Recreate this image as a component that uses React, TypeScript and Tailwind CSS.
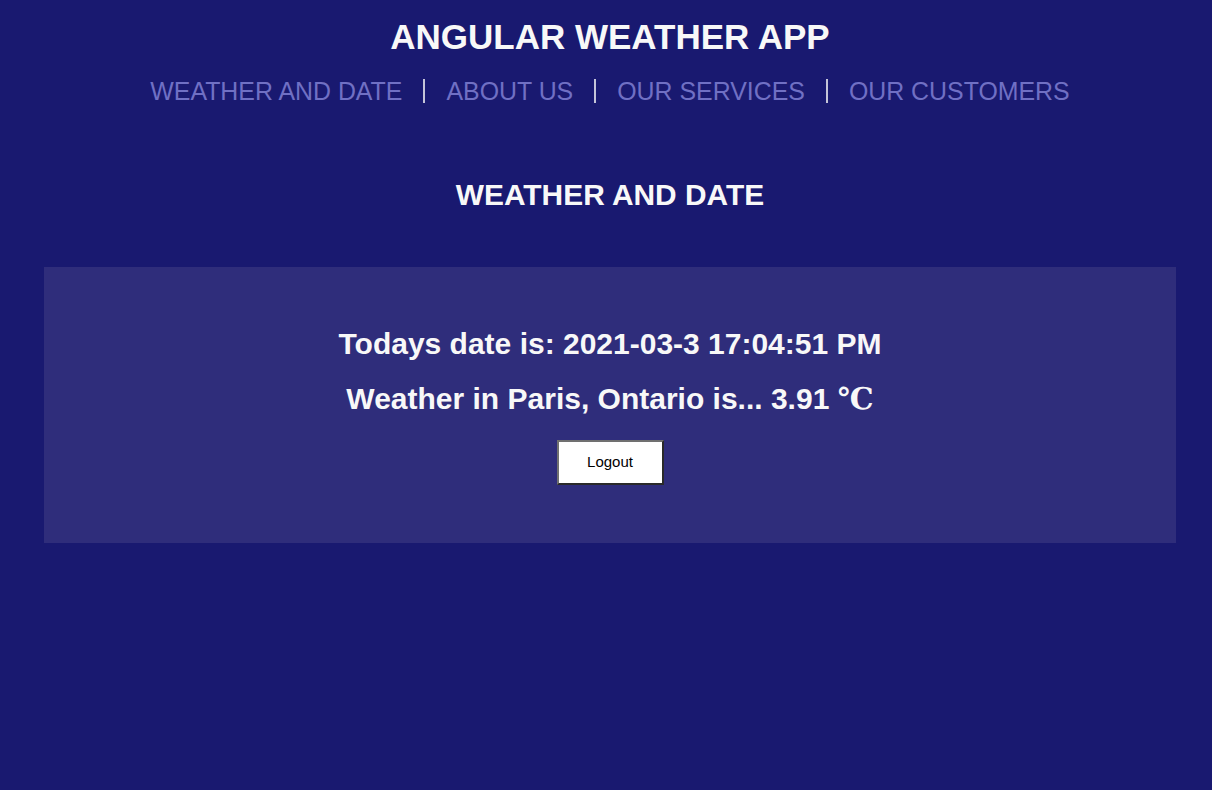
import React from "react";

const links = ["WEATHER AND DATE", "ABOUT US", "OUR SERVICES", "OUR CUSTOMERS"];

const App = () => {
  return (
    <div className="min-h-[790px] w-full bg-[#191970] pl-[8px] font-['Liberation_Sans',Arial,sans-serif] text-[#f8f8f8]">
      {/* header */}
      <header className="flex flex-col items-center pt-[17px]">
        <h1 className="text-[35px] font-bold leading-[40px]">ANGULAR WEATHER APP</h1>
        <nav className="mt-[20px] flex items-center">
          {links.map((l, i) => (
            <React.Fragment key={l}>
              {i > 0 && <span className="mx-[21px] h-[24px] w-[2px] bg-[#c4c4d8]" />}
              <a className="text-[24.9px] leading-[28px] text-[#7070c4]">{l}</a>
            </React.Fragment>
          ))}
        </nav>
      </header>

      <h2 className="mt-[73px] text-center text-[29.9px] font-bold leading-[33px]">WEATHER AND DATE</h2>

      {/* weather panel */}
      <section className="mx-[36px] mt-[56px] flex flex-col items-center bg-[#2f2d7b] pb-[58px] pt-[60px]">
        <p className="text-[30px] font-bold leading-[34px]">Todays date is: 2021-03-3 17:04:51 PM</p>
        <p className="mt-[21px] text-[30px] font-bold leading-[34px]">
          Weather in Paris, Ontario is... 3.91{" "}
          <span className="font-['Liberation_Serif','DejaVu_Serif',serif] font-bold">℃</span>
        </p>
        <button className="mt-[24px] h-[45px] w-[107px] border-2 border-b-[#2a2a2a] border-l-[#707070] border-r-[#2a2a2a] border-t-[#707070] bg-white text-[15px] text-black">
          Logout
        </button>
      </section>
    </div>
  );
};

export default App;
